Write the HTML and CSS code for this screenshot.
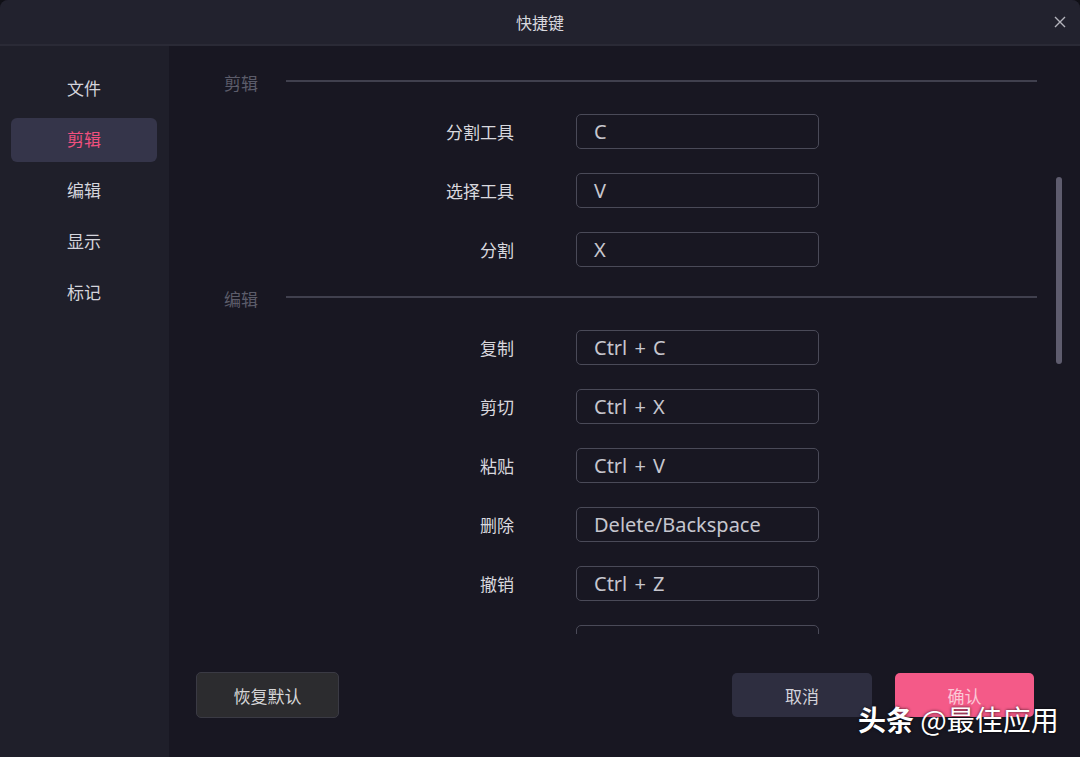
FILE: index.html
```html
<!DOCTYPE html>
<html lang="zh-CN">
<head>
  <meta charset="UTF-8">
  <title>快捷键</title>
  <link rel="stylesheet" href="styles.css">
</head>
<body>

<div class="dialog">
  <div class="titlebar">
    <span class="title">快捷键</span>
    <span class="close">
      <svg width="12" height="12" viewBox="0 0 12 12"><path d="M1 1 L11 11 M11 1 L1 11" stroke="#b4b4bc" stroke-width="1.4" fill="none"/></svg>
    </span>
  </div>

  <div class="body">
    <!-- left menu -->
    <div class="sidebar">
      <div class="nav-item">文件</div>
      <div class="nav-item active">剪辑</div>
      <div class="nav-item">编辑</div>
      <div class="nav-item">显示</div>
      <div class="nav-item">标记</div>
    </div>

    <div class="main">
      <div class="scroll">
        <div class="section-head"><span>剪辑</span><div class="rule"></div></div>
        <div class="row"><label>分割工具</label><div class="key">C</div></div>
        <div class="row"><label>选择工具</label><div class="key">V</div></div>
        <div class="row"><label>分割</label><div class="key">X</div></div>

        <div class="section-head second"><span>编辑</span><div class="rule"></div></div>
        <div class="row"><label>复制</label><div class="key">Ctrl + C</div></div>
        <div class="row"><label>剪切</label><div class="key">Ctrl + X</div></div>
        <div class="row"><label>粘贴</label><div class="key">Ctrl + V</div></div>
        <div class="row"><label>删除</label><div class="key">Delete/Backspace</div></div>
        <div class="row"><label>撤销</label><div class="key">Ctrl + Z</div></div>
        <div class="row"><label></label><div class="key"></div></div>

        <div class="scrollbar"></div>
      </div>

      <div class="footer">
        <button class="btn reset">恢复默认</button>
        <div class="spacer"></div>
        <button class="btn cancel">取消</button>
        <button class="btn ok">确认</button>
      </div>
    </div>
  </div>

  <div class="watermark"><b>头条</b> @最佳应用</div>
</div>

</body>
</html>
```

FILE: styles.css
```css
body {
  margin: 0;
  background-color: #101016;
  font-family: "Noto Sans CJK SC", "Noto Sans", sans-serif;
}
.dialog {
  position: relative;
  width: 1080px;
  height: 757px;
  display: flex;
  flex-direction: column;
  border-radius: 8px 8px 0 0;
  overflow: hidden;
  background-color: #181722;
}
.titlebar {
  height: 44px;
  flex-shrink: 0;
  display: flex;
  align-items: center;
  justify-content: center;
  position: relative;
  background-color: #22222e;
  border-bottom: 2px solid #2a2a36;
}
.title {
  font-size: 16px;
  color: #d8d8de;
}
.close {
  position: absolute;
  right: 14px;
  top: 16px;
  width: 12px;
  height: 12px;
  display: flex;
}
.body {
  flex: 1;
  display: flex;
  min-height: 0;
}
.sidebar {
  width: 169px;
  flex-shrink: 0;
  background-color: #1f1f2a;
  padding: 21px 0 0 11px;
  box-sizing: border-box;
}
.nav-item {
  width: 146px;
  height: 44px;
  margin-bottom: 7px;
  border-radius: 6px;
  display: flex;
  align-items: center;
  justify-content: center;
  padding-bottom: 4px;
  box-sizing: border-box;
  font-size: 17px;
  color: #d4d4dc;
}
.nav-item.active {
  background-color: #35354a;
  color: #f0507e;
}
.main {
  flex: 1;
  display: flex;
  flex-direction: column;
  min-width: 0;
}
.scroll {
  position: relative;
  height: 588px;
  overflow: hidden;
  padding-top: 23px;
  box-sizing: border-box;
}
.section-head {
  display: flex;
  align-items: center;
  height: 26px;
  padding: 0 43px 0 55px;
  margin-bottom: 19px;
}
.section-head.second {
  margin-top: -6px;
}
.section-head span {
  font-size: 17px;
  color: #5c5c6a;
}
.rule {
  flex: 1;
  height: 2px;
  margin-left: 28px;
  margin-top: -2px;
  background-color: #40404e;
}
.row {
  display: flex;
  align-items: center;
  height: 35px;
  margin-bottom: 24px;
}
.row label {
  width: 345px;
  text-align: right;
  font-size: 17px;
  color: #d8d8de;
}
.key {
  margin-left: 62px;
  width: 243px;
  height: 35px;
  box-sizing: border-box;
  border: 1.5px solid #4a4a58;
  border-radius: 5px;
  padding-left: 17px;
  display: flex;
  align-items: center;
  font-family: "Noto Sans", sans-serif;
  font-size: 20px;
  word-spacing: 2px;
  color: #c6c6ce;
}
.scrollbar {
  position: absolute;
  right: 18px;
  top: 131px;
  width: 6px;
  height: 187px;
  border-radius: 3px;
  background-color: #5e5c6e;
}
.footer {
  flex: 1;
  display: flex;
  align-items: flex-start;
  padding: 38px 46px 0 27px;
}
.spacer {
  flex: 1;
}
.btn {
  font-family: "Noto Sans CJK SC", sans-serif;
  font-size: 17px;
  border: none;
  border-radius: 5px;
  height: 44px;
}
.reset {
  width: 143px;
  height: 46px;
  background-color: #2c2c2f;
  border: 1px solid #3a3a44;
  color: #d6d6d8;
}
.cancel {
  width: 140px;
  margin-top: 1px;
  background-color: #2e2e40;
  color: #d4d4dc;
}
.ok {
  width: 139px;
  margin-top: 1px;
  margin-left: 23px;
  background-color: #f45a88;
  color: #fbc7d6;
}
.watermark {
  position: absolute;
  left: 858px;
  top: 699px;
  font-size: 28px;
  color: #ffffff;
  text-shadow: 0 0 3px rgba(0, 0, 0, 0.8);
  white-space: nowrap;
}
.watermark b {
  font-weight: 700;
}
```
